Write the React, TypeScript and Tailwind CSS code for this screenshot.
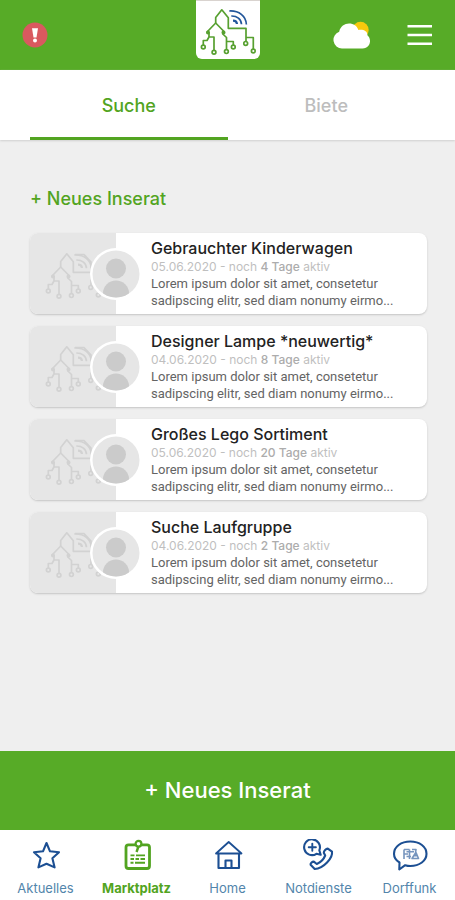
import React, { useState } from 'react';

const listings = [
  { title: 'Gebrauchter Kinderwagen', date: '05.06.2020', days: '4 Tage' },
  { title: 'Designer Lampe *neuwertig*', date: '04.06.2020', days: '8 Tage' },
  { title: 'Großes Lego Sortiment', date: '05.06.2020', days: '20 Tage' },
  { title: 'Suche Laufgruppe', date: '04.06.2020', days: '2 Tage' }
];

const tabs = ['Suche', 'Biete'];

// House with circuit board roots and a wifi signal
const VillageLogo = ({ line, signal, frame = false }: { line: string; signal: string; frame?: boolean }) => (
  <svg viewBox="0 0 64 58" className="w-16 h-[58px]" fill="none" strokeWidth="1.7" aria-hidden="true">
    <g stroke={line} strokeLinejoin="round">
      <path d="M19.7 22V16.5L25.8 8.8L32.3 16.7V27.3H50V40" />
      <path d="M50 36.5H57.3V48" />
      <path d="M19.7 22L11.5 30.5L13 32.5V36H18V49" />
      <path d="M13 36L11 39.5H7.3V44" />
      <path d="M19.7 22L28 30.5L26.8 33L30.5 36.5V48.5" />
      <path d="M30.5 40.5H37.3V44" />
      <circle cx="12" cy="31.5" r="1.2" />
      <circle cx="27.5" cy="31.5" r="1.2" />
      <circle cx="7.3" cy="46" r="1.9" />
      <circle cx="18" cy="51.2" r="1.9" />
      <circle cx="30.4" cy="50.6" r="1.9" />
      <circle cx="37.3" cy="46" r="1.9" />
      <circle cx="49.7" cy="42.4" r="1.9" />
      <circle cx="57.3" cy="50" r="1.9" />
      {frame && <path d="M34 9.5H43L50 17V27" />}
    </g>
    <g stroke={signal}>
      <path d="M33.3 10C43 9.5 50 15 50.4 23.5" />
      <path d="M35.3 15C41 14.8 45.2 18 45.5 23.2" />
      <path d="M37 19.6C39.2 19.6 40.8 21 41 23" strokeWidth="2.2" />
    </g>
  </svg>
);

const Avatar = () => (
  <svg viewBox="0 0 52 52" className="w-[52px] h-[52px]" aria-hidden="true">
    <defs>
      <clipPath id="avatar-clip">
        <circle cx="26" cy="26" r="23.5" />
      </clipPath>
    </defs>
    <circle cx="26" cy="26" r="26" fill="#fff" />
    <circle cx="26" cy="26" r="23.5" fill="#e6e6e6" />
    <g fill="#cbcbcb" clipPath="url(#avatar-clip)">
      <circle cx="26" cy="20.5" r="10" />
      <ellipse cx="26" cy="45" rx="13" ry="12.5" />
    </g>
  </svg>
);

const AlertIcon = () => (
  <svg viewBox="0 0 26 26" className="w-[26px] h-[26px]" aria-hidden="true">
    <circle cx="13" cy="13" r="12.5" fill="#d9595f" />
    <path d="M10 6.2H16L14.5 15.4H11.5Z" fill="#fff" />
    <circle cx="13" cy="18.5" r="2" fill="#fff" />
  </svg>
);

const WeatherIcon = () => (
  <svg viewBox="0 0 38 28" className="w-[38px] h-7" aria-hidden="true">
    <circle cx="27.5" cy="9" r="8.2" fill="#f5c90d" />
    <path
      d="M9 27.5A8.6 8.6 0 0 1 6.2 10.8C7.2 5.4 11.8 2.6 16 2.6C20.6 2.6 24 5 25.4 8.9C31 8.2 34.6 10.4 34.4 14.2C38.8 17.6 38 27.5 29.5 27.5Z"
      fill="#fff"
    />
  </svg>
);

const MenuIcon = () => (
  <svg viewBox="0 0 26 22" className="w-[26px] h-[22px]" stroke="#fff" strokeWidth="2.6" aria-hidden="true">
    <path d="M0.5 2.3H25M0.5 11H25M0.5 19.7H25" />
  </svg>
);

const StarIcon = () => (
  <svg viewBox="0 0 34 32" className="w-[34px] h-8" fill="none" stroke="currentColor" strokeWidth="2.1" strokeLinejoin="round" aria-hidden="true">
    <path d="M17.5 4L21 12.3L30 13.2L23.4 19.2L25.6 28.4L17.5 24.8L9.4 28.4L11.6 19.2L5 13.2L14 12.3Z" />
  </svg>
);

const BoardIcon = () => (
  <svg viewBox="0 0 34 32" className="w-[34px] h-8" fill="none" stroke="currentColor" aria-hidden="true">
    <path d="M15 5.8H8.5A2.5 2.5 0 0 0 6 8.3V27A2.5 2.5 0 0 0 8.5 29.500H27A2.500 2.500 0 0 0 29.500 27V8.300A2.500 2.500 0 0 0 27 5.800H22" strokeWidth="2.8" />
    <circle cx="18.500" cy="4.800" r="2.900" strokeWidth="2.200" />
    <path d="M18.500 7.500L16.500 13" strokeWidth="2.400" />
    <path d="M10.500 16.400H14.500M16 16.400H25M10.500 20H14M15.500 20H19M20.500 20H25M10.500 23.800H13.500M15 23.800H25" strokeWidth="1.900" />
  </svg>
);

const HomeIcon = () => (
  <svg viewBox="0 0 34 32" className="w-[34px] h-8" fill="none" stroke="currentColor" strokeWidth="2.1" strokeLinejoin="round" aria-hidden="true">
    <path d="M7.500 14.500V29H28V14.500" />
    <path d="M5 14.500L17.700 3L30.500 14.500Z" strokeWidth="1.800" />
    <path d="M14.500 29V21.500H20.500V29" />
  </svg>
);

const EmergencyIcon = () => (
  <svg viewBox="0 0 34 32" className="w-[34px] h-8" fill="none" stroke="currentColor" strokeWidth="2.1" strokeLinejoin="round" strokeLinecap="round" aria-hidden="true">
    <path d="M17.300 11.300L18.700 15.800L14.400 14.800A7.900 7.900 0 1 1 17.300 11.300Z" />
    <path d="M10.300 4.600V11.800M6.700 8.200H13.900" strokeWidth="1.900" />
    <path d="M25.800 9.600L30 12.600C31 19 21.500 29.600 12.700 30L8.600 25.800C8.200 24.300 10 22.600 11.800 22.600L14.800 25C18 23.600 21.800 20 23.200 16.500L21.800 13.800C21.800 12 24 9.800 25.800 9.600Z" />
  </svg>
);

const ChatIcon = () => (
  <svg viewBox="0 0 38 32" className="w-[38px] h-8" fill="none" stroke="currentColor" strokeWidth="2.1" strokeLinejoin="round" aria-hidden="true">
    <path d="M8.500 23.500C5 21.500 3 18.500 3 14.800C3 7.800 10 2.500 19.300 2.500S35.500 7.800 35.500 14.800S28.500 27 19.300 27C17.500 27 15.800 26.700 14.200 26.200L8.300 30.500Z" />
    <g opacity="0.6">
      <path d="M13 10.500H18.500M13 10.500V20M13 15H17M18.500 10.500V20M15.500 12.700H23M15.500 17.500H20" strokeWidth="1.600" />
      <path d="M21 10.500H25L24.500 14L21 19.500H27.500L25 13.500M22.500 16.700H27" strokeWidth="1.600" />
    </g>
  </svg>
);

const navItems = [
  { label: 'Aktuelles', icon: StarIcon },
  { label: 'Marktplatz', icon: BoardIcon },
  { label: 'Home', icon: HomeIcon },
  { label: 'Notdienste', icon: EmergencyIcon },
  { label: 'Dorffunk', icon: ChatIcon }
];

const App = () => {
  const [activeTab, setActiveTab] = useState('Suche');
  const [activeNav, setActiveNav] = useState('Marktplatz');

  return (
    <div className="min-h-screen flex flex-col bg-[#efefef] font-['Inter',sans-serif]">
      {/* Header */}
      <header className="grid grid-cols-[1fr_auto_1fr] h-[70px] bg-[#57ab27] px-[22px]">
        <div className="flex items-center">
          <button aria-label="Warnungen">
            <AlertIcon />
          </button>
        </div>
        <div className="self-start bg-white rounded-b-md border-t border-[#d9d3cf]">
          <VillageLogo line="#57a030" signal="#23579b" />
        </div>
        <div className="flex items-center justify-end gap-9">
          <WeatherIcon />
          <button aria-label="Menü">
            <MenuIcon />
          </button>
        </div>
      </header>

      {/* Tabs */}
      <div role="tablist" className="flex h-[70px] px-[30px] bg-white shadow-[0_1px_2px_#cfcfcf]">
        {tabs.map((tab) => (
          <button
            key={tab}
            role="tab"
            aria-selected={activeTab === tab}
            onClick={() => setActiveTab(tab)}
            className={`flex-1 pt-1 border-b-[3px] text-lg font-medium ${
              activeTab === tab ? 'border-[#52a421] text-[#52a421]' : 'border-transparent text-[#bdbdbd]'
            }`}
          >
            {tab}
          </button>
        ))}
      </div>

      {/* Listings */}
      <main className="flex-1 pl-[30px] pr-7 pt-[45px] pb-8">
        <button className="block text-lg font-medium text-[#52a421]">+ Neues Inserat</button>
        <ul className="mt-5 flex flex-col gap-3">
          {listings.map((item) => (
            <li key={item.title} className="flex h-[81px] bg-white rounded-lg overflow-hidden shadow-[0_1px_2px_#c4c4c4]">
              <div className="w-[86px] shrink-0 flex items-center justify-center bg-[#e6e6e6]">
                <VillageLogo line="#d2d2d2" signal="#d2d2d2" frame />
              </div>
              <div className="-ml-[26px] shrink-0 self-center">
                <Avatar />
              </div>
              <div className="ml-[9px] pt-[5px] flex-1 min-w-0 pr-4">
                <h2 className="text-base leading-5 font-medium text-[#222222]">{item.title}</h2>
                <p className="text-xs leading-[17px] text-[#bfbfbf]">
                  {item.date} - noch <span className="font-medium text-[#acacac]">{item.days}</span> aktiv
                </p>
                <p className="font-['Roboto',sans-serif] text-[13px] leading-[17px] text-[#646464]">
                  Lorem ipsum dolor sit amet, consetetur sadipscing elitr, sed diam nonumy eirmo...
                </p>
              </div>
            </li>
          ))}
        </ul>
      </main>

      {/* Bottom action */}
      <button className="h-[79px] bg-[#57ab27] text-[22px] font-medium text-white">+ Neues Inserat</button>

      {/* Bottom navigation */}
      <nav className="grid grid-cols-5 h-[70px] bg-white">
        {navItems.map((item) => (
          <a
            key={item.label}
            href="#"
            onClick={() => setActiveNav(item.label)}
            className={`flex flex-col items-center pt-[9px] ${
              activeNav === item.label ? 'text-[#52a421] font-bold' : 'text-[#1c4f93]'
            }`}
          >
            <item.icon />
            <span className={`mt-2 text-[13px] leading-[18px] ${activeNav === item.label ? '' : 'text-[#5285ab]'}`}>
              {item.label}
            </span>
          </a>
        ))}
      </nav>
    </div>
  );
};

export default App;
